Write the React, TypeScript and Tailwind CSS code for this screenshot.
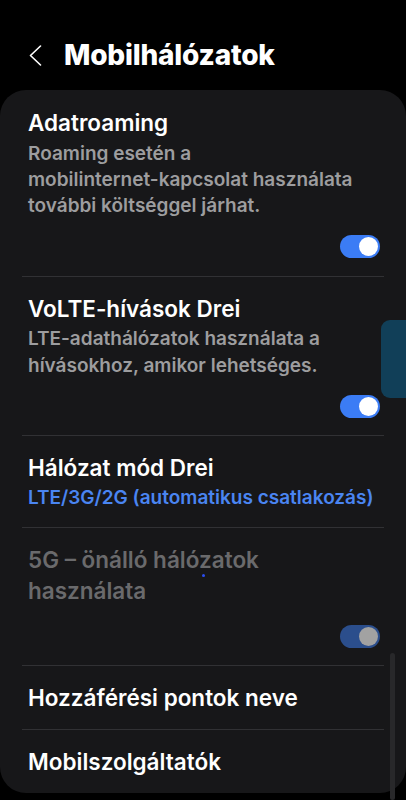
import * as React from "react";

function Toggle({ disabled = false }: { disabled?: boolean }) {
    return (
        <div
            className={
                "w-[40px] h-[23px] rounded-full flex items-center justify-end pr-[2px] " +
                (disabled ? "bg-[#2b4e8c]" : "bg-[#3b7cf5]")
            }
        >
            <div
                className={
                    "w-[19px] h-[19px] rounded-full " +
                    (disabled ? "bg-[#a2a2a2]" : "bg-white")
                }
            />
        </div>
    );
}

function Divider() {
    return <div className="h-px bg-[#313134]" />;
}

export default function App() {
    return (
        <div
            className="relative w-[406px] h-[800px] overflow-hidden bg-black text-white"
            style={{ fontFamily: "Inter, 'Noto Sans', sans-serif" }}
        >
            {/* header */}
            <div className="h-[90px] pt-[20px] flex items-center">
                <svg className="ml-[29px]" width="13" height="21" viewBox="0 0 13 21" fill="none">
                    <polyline
                        points="11.5,1 1.5,10.5 11.5,20"
                        stroke="white"
                        strokeWidth="1.6"
                        strokeLinecap="round"
                        strokeLinejoin="round"
                    />
                </svg>
                <h1 className="ml-[22px] text-[28px] font-extrabold tracking-[-0.2px]">
                    Mobilhálózatok
                </h1>
            </div>

            {/* settings card */}
            <div className="h-[703px] rounded-[26px] bg-[#171719] px-[22px]">
                <div className="pt-[19px] pb-[18px]">
                    <div className="px-[6px] whitespace-nowrap">
                        <p className="text-[22.5px] leading-[28px] font-semibold">Adatroaming</p>
                        <p className="mt-[4px] text-[19px] leading-[26px] font-semibold text-[#9d9d9f]">
                            Roaming esetén a<br />
                            mobilinternet-kapcsolat használata<br />
                            további költséggel járhat.
                        </p>
                    </div>
                    <div className="mt-[16px] flex justify-end pr-[4px]">
                        <Toggle />
                    </div>
                </div>
                <Divider />

                <div className="pt-[18px] pb-[17px]">
                    <div className="px-[6px] whitespace-nowrap">
                        <p className="text-[22.5px] leading-[28px] font-semibold">VoLTE-hívások Drei</p>
                        <p className="mt-[2px] text-[19px] leading-[27px] font-semibold text-[#9d9d9f]">
                            LTE-adathálózatok használata a<br />
                            hívásokhoz, amikor lehetséges.
                        </p>
                    </div>
                    <div className="mt-[16px] flex justify-end pr-[4px]">
                        <Toggle />
                    </div>
                </div>
                <Divider />

                <div className="pt-[18px] pb-[16px] px-[6px] whitespace-nowrap">
                    <p className="text-[22.5px] leading-[28px] font-semibold">Hálózat mód Drei</p>
                    <p className="mt-[3px] text-[19px] leading-[26px] font-semibold text-[#4a85f2]">
                        LTE/3G/2G (automatikus csatlakozás)
                    </p>
                </div>
                <Divider />

                <div className="pt-[16px] pb-[17px]">
                    <p className="px-[6px] text-[22.5px] leading-[31px] font-semibold text-[#6a6a6c] whitespace-nowrap">
                        5G – önálló hálózatok<br />
                        használata
                    </p>
                    <div className="mt-[19px] flex justify-end pr-[4px]">
                        <Toggle disabled />
                    </div>
                </div>
                <Divider />

                <div className="h-[63px] flex items-center px-[6px]">
                    <p className="text-[22.5px] font-semibold">Hozzáférési pontok neve</p>
                </div>
                <Divider />

                <div className="h-[63px] flex items-center px-[6px]">
                    <p className="text-[22.5px] font-semibold">Mobilszolgáltatók</p>
                </div>
            </div>

            {/* edge panel handle */}
            <div className="absolute right-0 top-[320px] w-[25px] h-[78px] rounded-l-[9px] bg-[#113f58]" />
            {/* scrollbar */}
            <div className="absolute left-[390px] top-[653px] w-[5px] h-[147px] rounded-full bg-[#28282a]" />
            {/* tiny touch artifact */}
            <div className="absolute left-[202px] top-[574px] w-[3px] h-[3px] rounded-full bg-[#2a4df2]" />
        </div>
    );
}
